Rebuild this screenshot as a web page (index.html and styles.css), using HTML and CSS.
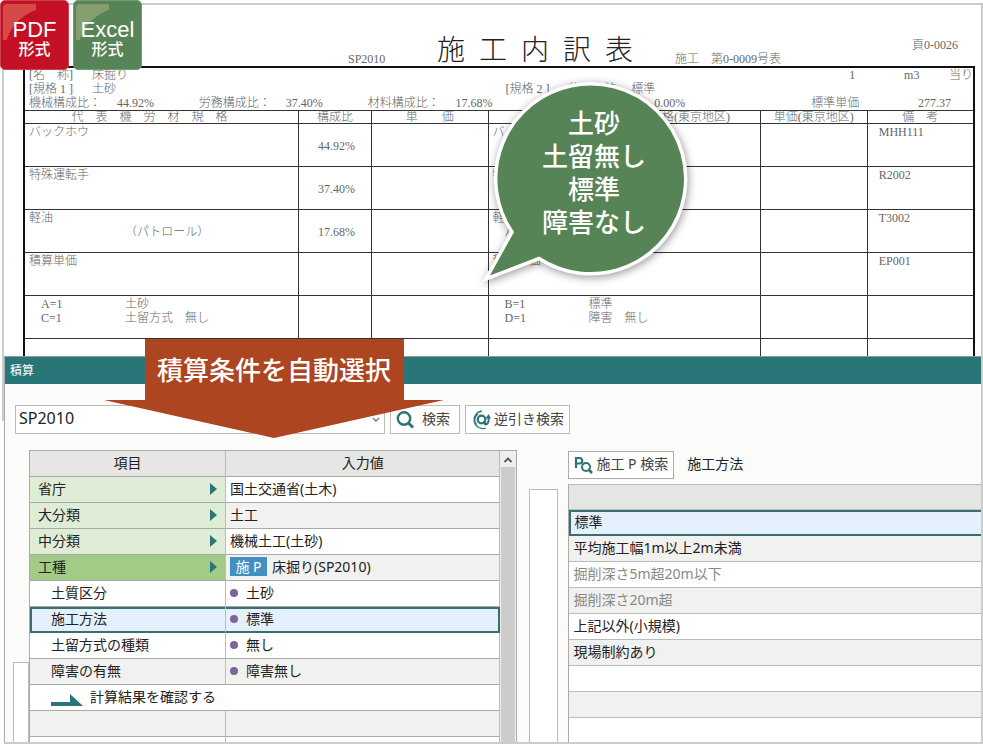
FILE: index.html
```html
<!DOCTYPE html>
<html lang="ja">
<head>
<meta charset="utf-8">
<title>施工内訳表</title>
<link rel="stylesheet" href="styles.css">
</head>
<body>
<main class="frame">
  <section class="doc">
    <header class="doc-head">
      <span class="doc-code">SP2010</span>
      <h1>施&ensp;工&ensp;内&ensp;訳&ensp;表</h1>
      <span class="doc-no">施工　第0-0009号表</span>
      <span class="doc-page">頁0-0026</span>
    </header>
    <div class="sheet">
      <div class="info">
        <div class="info-row row-name"><span>[名　称]</span><span>床掘り</span><span>1</span><span>m3</span><span>当り</span></div>
        <div class="info-row row-spec"><span>[規格 1 ]</span><span>土砂</span><span>[規格 2 ]</span><span>施工方法</span><span>標準</span></div>
        <div class="info-row row-ratio"><span>機械構成比：</span><span>44.92%</span><span>労務構成比：</span><span>37.40%</span><span>材料構成比：</span><span>17.68%</span><span>0.00%</span><span>標準単価</span><span>277.37</span></div>
      </div>
      <table class="cost">
        <colgroup><col class="c-name"><col class="c-ratio"><col class="c-price"><col class="c-tokyo"><col class="c-unit"><col></colgroup>
        <thead>
          <tr><th class="lead">代　表　機　労　材　規　格</th><th>構成比</th><th>単　　価</th><th>代　表　機　労　材　規　格(東京地区)</th><th>単価(東京地区)</th><th>備　考</th></tr>
        </thead>
        <tbody>
          <tr><td>バックホウ</td><td class="ratio">44.92%</td><td></td><td>バックホウ</td><td></td><td class="code">MHH111</td></tr>
          <tr><td>特殊運転手</td><td class="ratio">37.40%</td><td></td><td>特殊運転手</td><td></td><td class="code">R2002</td></tr>
          <tr><td>軽油<div class="note">（パトロール）</div></td><td class="ratio">17.68%</td><td></td><td>軽油<div class="note-r">パトロール</div></td><td></td><td class="code">T3002</td></tr>
          <tr><td>積算単価</td><td></td><td></td><td>積算単価</td><td></td><td class="code">EP001</td></tr>
          <tr>
            <td><dl class="cond"><dt>A=1</dt><dd>土砂</dd><dt>C=1</dt><dd>土留方式　無し</dd></dl></td><td></td><td></td>
            <td><dl class="cond"><dt>B=1</dt><dd>標準</dd><dt>D=1</dt><dd>障害　無し</dd></dl></td><td></td><td></td>
          </tr>
          <tr class="cut"><td></td><td></td><td></td><td></td><td></td><td></td></tr>
        </tbody>
      </table>
    </div>
  </section>

  <section class="app">
    <h2 class="app-title">積算</h2>
    <div class="toolbar">
      <div class="combo">
        <select aria-label="コード"><option>SP2010</option></select>
        <svg class="chev" viewBox="0 0 8 6" aria-hidden="true"><path d="M1 1l3 3 3-3" fill="none" stroke="#777" stroke-width="1.3"/></svg>
      </div>
      <button type="button" class="btn find">
        <svg width="20" height="20" viewBox="0 0 20 20" aria-hidden="true"><circle cx="9" cy="8.5" r="6.200" fill="none" stroke="#2b7477" stroke-width="2.4"/><path d="M13.500 13l4.500 4.500" stroke="#2b7477" stroke-width="3"/></svg>
        <span>検索</span>
      </button>
      <button type="button" class="btn reverse">
        <svg width="20" height="20" viewBox="0 0 20 20" fill="none" stroke="#2b7477" aria-hidden="true"><path d="M11 1A8.800 8.800 0 1 0 15 18" stroke-width="1.300"/><path d="M7 4A7 7 0 0 0 5.500 14.500" stroke-width="1.200"/><circle cx="10.500" cy="9.500" r="3.800" stroke-width="2.200"/><path d="M12.500 11.500l2.500 3.500" stroke-width="2.400"/><path d="M14.500 14.500c2.500-.5 3.500-3 3-7" stroke-width="2"/><path d="M14.500 8.500L17.500 4 20 8.500z" fill="#2b7477" stroke="none"/></svg>
        <span>逆引き検索</span>
      </button>
    </div>

    <div class="work">
      <div class="stub stub-left"></div>
      <div class="grid-box">
        <table class="items">
          <colgroup><col class="c-item"><col></colgroup>
          <thead><tr><th>項目</th><th>入力値</th></tr></thead>
          <tbody>
            <tr class="group"><td>省庁<i class="tri"></i></td><td>国土交通省(土木)</td></tr>
            <tr class="group"><td>大分類<i class="tri"></i></td><td>土工</td></tr>
            <tr class="group"><td>中分類<i class="tri"></i></td><td>機械土工(土砂)</td></tr>
            <tr class="group current"><td>工種<i class="tri"></i></td><td><span class="tag">施 P</span>床掘り(SP2010)</td></tr>
            <tr class="sub"><td>土質区分</td><td><i class="dot"></i>土砂</td></tr>
            <tr class="sub picked"><td>施工方法</td><td><i class="dot"></i>標準</td></tr>
            <tr class="sub"><td>土留方式の種類</td><td><i class="dot"></i>無し</td></tr>
            <tr class="sub"><td>障害の有無</td><td><i class="dot"></i>障害無し</td></tr>
            <tr class="sub"><td colspan="2"><svg class="go" width="32" height="13" viewBox="0 0 32 13" aria-hidden="true"><path d="M0 8h19V0l13 12H0z" fill="#2b7477"/></svg>計算結果を確認する</td></tr>
            <tr><td></td><td></td></tr>
            <tr><td></td><td></td></tr>
          </tbody>
        </table>
        <div class="scroll">
          <svg width="10" height="6" viewBox="0 0 10 6" aria-hidden="true"><path d="M1.500 5L5 1.500 8.500 5" fill="none" stroke="#555" stroke-width="1.800"/></svg>
          <div class="thumb"></div>
        </div>
      </div>
      <div class="stub stub-mid"></div>
      <div class="side">
        <div class="side-head">
          <button type="button" class="btn unit">
            <svg width="19" height="19" viewBox="0 0 19 19" fill="none" stroke="#2b7477" aria-hidden="true"><path d="M2 12V2h3.500a2.500 2.500 0 0 1 0 5.500H2" stroke-width="2.200"/><circle cx="12" cy="11" r="4" stroke-width="2"/><path d="M14.500 13.500l3.500 3.500" stroke-width="2.600"/></svg>
            <span>施工 P 検索</span>
          </button>
          <span class="side-label">施工方法</span>
        </div>
        <ul class="choices">
          <li class="head"></li>
          <li class="picked">標準</li>
          <li>平均施工幅1m以上2m未満</li>
          <li class="off">掘削深さ5m超20m以下</li>
          <li class="off">掘削深さ20m超</li>
          <li>上記以外(小規模)</li>
          <li>現場制約あり</li>
          <li></li>
          <li></li>
          <li></li>
        </ul>
      </div>
    </div>
  </section>

  <div class="badges">
    <div class="badge pdf"><b>PDF</b><span>形式</span></div>
    <div class="badge excel"><b>Excel</b><span>形式</span></div>
  </div>

  <div class="bubble">
    <svg width="220" height="212" viewBox="0 0 220 212" aria-hidden="true"><path d="M39 158A95 95 0 1 1 66 184.500L13 205Z" fill="#578457" stroke="#fff" stroke-width="3.500" stroke-miterlimit="10"/></svg>
    <p>土砂<br>土留無し<br>標準<br>障害なし</p>
  </div>

  <div class="banner">
    <svg width="340" height="100" viewBox="0 0 340 100" aria-hidden="true"><path d="M41 0H300V61H340L170 99 0 61H41z" fill="#ae4521"/></svg>
    <p>積算条件を自動選択</p>
  </div>
</main>
</body>
</html>
```
FILE: styles.css
```css
* { box-sizing: border-box; }
body {
  margin: 0;
  background: #fff;
  color: #222;
  font: 14px/20px "Noto Sans", "Noto Sans CJK JP", sans-serif;
}
h1, h2, p, ul, dl, dd { margin: 0; padding: 0; font-weight: inherit; }
table { width: 100%; border-spacing: 0; table-layout: fixed; }
th { font-weight: inherit; }
button, select { font: inherit; color: #444; }

.frame {
  position: relative;
  display: flex;
  flex-direction: column;
  height: calc(100vh - 3px);
  margin: 3px 0 0 2px;
  border: 2px solid #ccc;
}
.frame::after {
  content: "";
  position: absolute;
  left: -2px;
  top: 416px;
  bottom: -2px;
  width: 2px;
  background: #fff;
}

/* printed cost sheet */
.doc {
  padding: 0 6px 0 19px;
  color: #666;
  font: 300 12px/14px "Liberation Serif", "Noto Sans CJK JP", serif;
}
.doc-head {
  display: grid;
  grid-template-columns: 325fr 89fr 238fr 237fr 63fr;
  align-items: end;
  height: 61px;
  white-space: nowrap;
}
.doc-code { grid-column: 2; }
.doc-page { padding-bottom: 14px; }
.doc-head h1 { color: #222; font-size: 28px; line-height: 30px; }
.sheet { border: 2px solid #111; border-bottom: 0; }
.info { height: 42px; padding-left: 4px; white-space: nowrap; }
.info-row { display: grid; }
.row-name { grid-template-columns: 63fr 758fr 55fr 45fr 24fr; }
.row-spec { grid-template-columns: 63fr 414fr 63fr 63fr 342fr; }
.row-ratio { grid-template-columns: 88fr 82fr 87fr 82fr 88fr 199fr 157fr 107fr 55fr; }
.info-row span { min-width: 0; }

.c-name { width: 28.900%; }
.c-ratio { width: 7.700%; }
.c-price { width: 12.300%; }
.c-tokyo { width: 28.700%; }
.c-unit { width: 11.300%; }
.cost th, .cost td {
  padding: 1px 4px 0;
  border-top: 1px solid #333;
  border-right: 1px solid #333;
  white-space: nowrap;
}
.cost th:last-child, .cost td:last-child { border-right: 0; }
.cost th { height: 13px; padding: 0; line-height: 12px; }
.cost .lead { padding-right: 24px; }
.cost td { height: 43px; vertical-align: top; text-align: left; }
.cost .cut td { height: 18px; }
.cost .ratio { padding-top: 15px; padding-right: 16px; text-align: right; }
.cost .code { padding-left: 11px; }
.note { padding-left: 96px; }
.note-r { padding-left: 12px; }
.cond { display: grid; grid-template-columns: 84px 1fr; padding-left: 12px; }

/* estimate window */
.app {
  display: flex;
  flex: 1;
  flex-direction: column;
  min-height: 0;
  overflow: hidden;
  border-top: 1px solid #999;
  border-left: 1px solid #aaa;
  background: #fbfbfa;
}
.app-title {
  flex: none;
  padding: 0 5px;
  background: #287678;
  color: #fff;
  font-size: 12px;
  line-height: 27px;
}
.toolbar { display: flex; gap: 5px; padding: 21px 10px 16px; }
.combo { position: relative; flex: 0 0 370px; }
.combo select {
  width: 100%;
  height: 29px;
  padding: 0 3px 3px;
  border: 1px solid #bbb;
  border-radius: 0;
  background: #fff;
  color: #222;
  font-size: 16px;
  appearance: none;
}
.chev { position: absolute; right: 5px; top: 12px; width: 8px; height: 6px; }
.btn {
  display: flex;
  align-items: center;
  height: 29px;
  padding: 0 5px;
  border: 1px solid #bbb;
  background: #fff;
  white-space: nowrap;
}
.btn span { padding-bottom: 2px; }
.find { gap: 7px; padding: 0 9px 0 4px; }
.reverse { gap: 3px; }
.unit { gap: 3px; height: 28px; border-color: #aaa; }

.work {
  display: flex;
  flex: 1;
  min-height: 0;
  padding-left: 8px;
}
.stub { flex: none; border: 1px solid #bbb; border-bottom: 0; background: #fff; }
.stub-left { width: 16px; margin: 212px 0 0; }
.stub-mid { width: 29px; margin: 39px 10px 0 12px; }
.grid-box {
  display: flex;
  flex: 487 1 0;
  min-width: 0;
  border: 1px solid #aaa;
  border-bottom: 0;
}
.items { flex: 1; align-self: flex-start; }
.c-item { width: 196px; }
.items th, .items td {
  height: 26px;
  padding: 0 4px 2px;
  border-right: 1px solid #bbb;
  border-bottom: 1px solid #aaa;
  line-height: 20px;
}
.items th { background: #e6e6e5; }
.items td { background: #fff; }
.items tr:nth-child(even) td { background: #f1f1f0; }
.items .group td:first-child { padding: 0 8px 2px; background: #dfedd7; }
.items .current td:first-child { background: #a3cb88; }
.items .sub td:first-child { padding-left: 21px; }
.items .picked:nth-child(even) td {
  background: #e4f0fb;
  box-shadow: inset 0 2px #39706f, inset 0 -1px #39706f;
  border-bottom-color: #39706f;
}
.items .picked:nth-child(even) td:first-child { box-shadow: inset 2px 2px #39706f, inset 0 -1px #39706f; }
.items .picked:nth-child(even) td:last-child { box-shadow: inset -1px 2px #39706f, inset 0 -1px #39706f; border-right-color: #39706f; }
.tri {
  float: right;
  margin: 4px 0;
  border: solid transparent;
  border-width: 6px 0 6px 7px;
  border-left-color: #2b7477;
}
.dot {
  display: inline-block;
  width: 8px;
  height: 8px;
  margin-right: 8px;
  border-radius: 50%;
  background: #7c659b;
  vertical-align: 1px;
}
.tag {
  display: inline-block;
  width: 37px;
  margin-right: 5px;
  background: #438fc4;
  color: #fff;
  line-height: 19px;
  text-align: center;
}
.go { margin-right: 7px; vertical-align: -5px; }
.scroll {
  display: flex;
  flex: 0 0 16px;
  flex-direction: column;
  align-items: center;
  padding: 6px 1px 0;
  background: #eee;
}
.thumb { flex: 1; width: 100%; margin-top: 4px; background: #ccc; }

.side { flex: 413 1 0; min-width: 0; padding-top: 1px; }
.side-head { display: flex; align-items: center; gap: 13px; margin-bottom: 5px; }
.side-label { padding-bottom: 2px; }
.choices { border-top: 1px solid #bbb; border-left: 1px solid #aaa; list-style: none; }
.choices li {
  height: 26px;
  padding: 0 4px;
  border-bottom: 1px solid #bbb;
  background: #fff;
  line-height: 23px;
}
.choices li:nth-child(odd) { background: #f1f1f0; }
.choices .head:first-child { height: 25px; background: #e5e5e4; }
.choices .picked { padding: 0 3px; border: 2px solid #39706f; border-right: 0; background: #e4f0fb; line-height: 20px; }
.choices .off { color: #888; }

/* marks laid over the two screens */
.badges { position: absolute; left: -4px; top: -5px; display: flex; gap: 4px; }
.badge {
  position: relative;
  display: flex;
  flex-direction: column;
  align-items: center;
  width: 69px;
  height: 70px;
  padding-top: 18px;
  border-radius: 5px;
  overflow: hidden;
  color: #fff;
}
.badge::before {
  content: "";
  position: absolute;
  left: 2px;
  top: 3px;
  width: 33px;
  height: 36px;
  border-radius: 4px 0 0 0;
  background: radial-gradient(circle at 48px 50px, transparent 46px, rgba(255, 225, 170, .28) 47px);
}
.badge b {
  position: relative;
  font: 400 22px/22px "Liberation Sans", sans-serif;
}
.badge span { position: relative; font-size: 16px; line-height: 16px; font-weight: 500; }
.pdf { background: #c41024; border: 1px solid #cc4350; }
.excel { background: #578457; border: 1px solid #769b75; }

.bubble { position: absolute; left: 469px; top: 69px; width: 220px; color: #fff; }
.bubble svg { display: block; filter: drop-shadow(1px 2px 4px rgba(0, 0, 0, .4)); }
.bubble p {
  position: absolute;
  left: 22px;
  right: 0;
  top: 33px;
  font-size: 26px;
  font-weight: 500;
  line-height: 33px;
  text-align: center;
}
.banner { position: absolute; left: 100px; top: 334px; width: 340px; color: #fff; }
.banner svg { display: block; }
.banner p {
  position: absolute;
  left: 0;
  right: 0;
  top: 13px;
  font-size: 26px;
  font-weight: 500;
  line-height: 36px;
  text-align: center;
}
```
